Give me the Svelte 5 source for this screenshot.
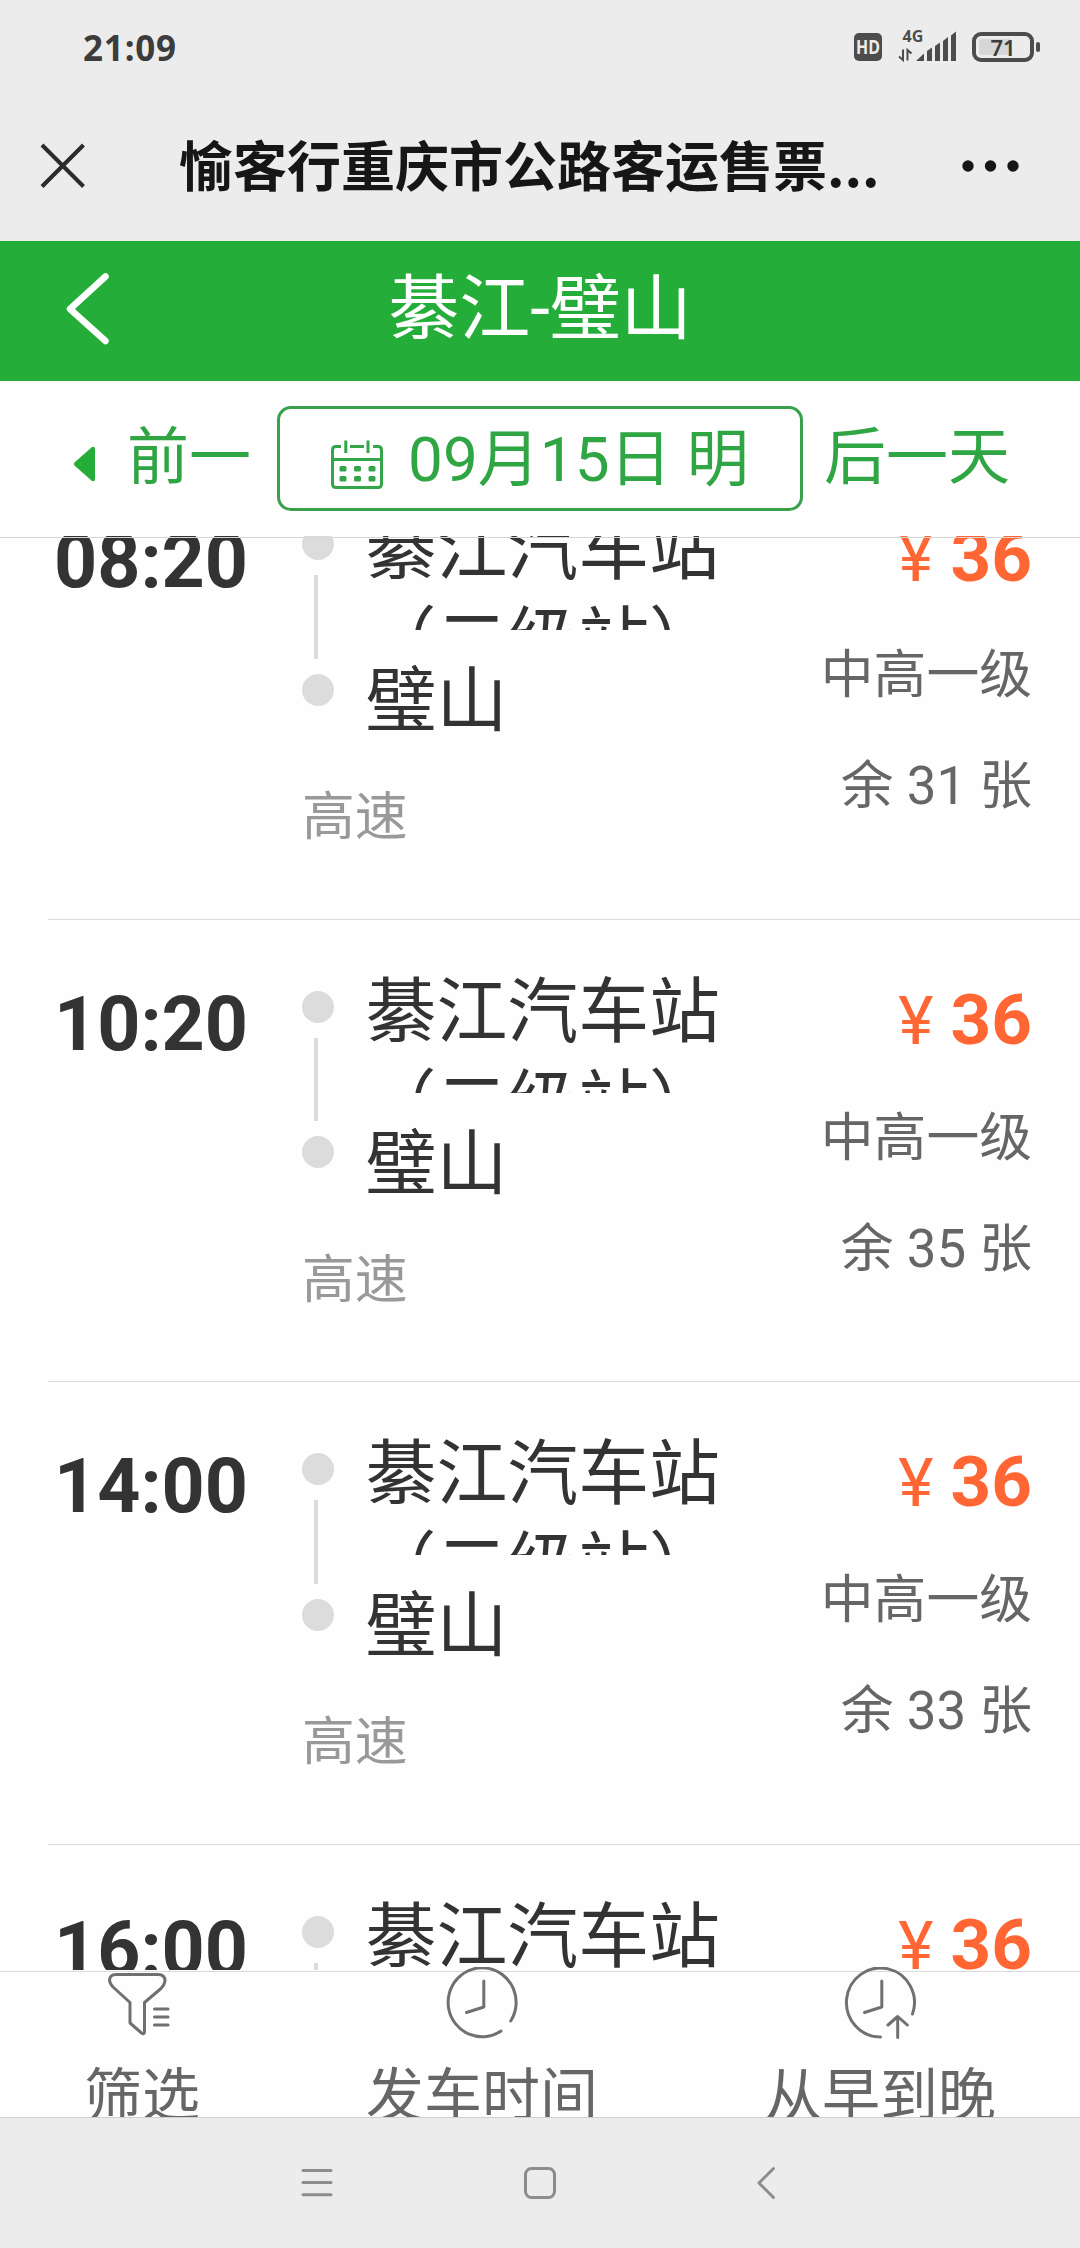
<script lang="ts">
  type Trip = {
    time: string;
    from: string;
    to: string;
    road: string;
    price: number;
    level: string;
    left: number;
  };

  const base = { from: '綦江汽车站（二级站）', to: '璧山', road: '高速', price: 36, level: '中高一级' };

  const trips: Trip[] = [
    { ...base, time: '08:20', left: 31 },
    { ...base, time: '10:20', left: 35 },
    { ...base, time: '14:00', left: 33 },
    { ...base, time: '16:00', left: 33 },
  ];

  let title = $state('愉客行重庆市公路客运售票...');
  let date = $state('09月15日 明');
</script>

<div class="screen">
  <div class="status">
    <span class="clock">21:09</span>
    <svg class="status-icons" viewBox="0 0 190 40" width="190" height="40">
      <rect x="0" y="5" width="28" height="28" rx="5" fill="#4c4c4c" />
      <text x="14" y="26" class="hd" text-anchor="middle" textLength="24" lengthAdjust="spacingAndGlyphs">HD</text>
      <text x="48.5" y="14" class="net">4G</text>
      <g fill="#4c4c4c">
        <path d="M62 33L70 25.5V33z" />
        <path d="M73 23l5-3.5V33h-5z" />
        <path d="M81 18l5-3.5V33h-5z" />
        <path d="M89 13l5-4V33h-5z" />
        <path d="M97 7.500l5-4V33h-5z" />
      </g>
      <path d="M45 28.500L49 32V21.500M57.500 25.500L53.500 22V32.500" fill="none" stroke="#4c4c4c" stroke-width="2" />
      <rect x="120" y="6" width="58" height="26" rx="7" fill="none" stroke="#4c4c4c" stroke-width="4" />
      <rect x="125" y="11" width="32" height="16" rx="2" fill="#d6d6d6" />
      <rect x="182" y="14" width="4" height="10" rx="2" fill="#4c4c4c" />
      <text x="149" y="28" class="pct" text-anchor="middle">71</text>
    </svg>
  </div>

  <div class="titlebar">
    <svg class="close" viewBox="0 0 46 46" width="46" height="46">
      <path d="M2 2L43.500 43.500M43.500 2L2 43.500" fill="none" stroke="#2b2b2b" stroke-width="4" />
    </svg>
    <h1>{title}</h1>
    <svg class="more" viewBox="0 0 60 12" width="60" height="12">
      <circle cx="6" cy="6" r="5.700" />
      <circle cx="28.500" cy="6" r="5.700" />
      <circle cx="51" cy="6" r="5.700" />
    </svg>
  </div>

  <header>
    <svg class="back" viewBox="0 0 44 74" width="44" height="74">
      <path d="M39.500 4.500L4 37L39.500 69" fill="none" stroke="#fff" stroke-width="6.500" stroke-linecap="round" stroke-linejoin="round" />
    </svg>
    <h2>綦江-璧山</h2>
  </header>

  <div class="days">
    <div class="prev">
      <svg viewBox="0 0 22 36" width="22" height="36">
        <path d="M1.500 16.500L19 1Q22 0 22 3V33Q22 36 19 35L1.500 19.500Q0 18 1.500 16.500z" fill="#24ad38" />
      </svg>
      <span>前一</span>
    </div>
    <div class="date">
      <svg viewBox="0 0 52 50" width="52" height="50" fill="none" stroke="#34a548" stroke-width="3">
        <path d="M10 6.500H5Q1.500 6.500 1.500 10V44Q1.500 47.500 5 47.500H47Q50.500 47.500 50.500 44V10Q50.500 6.500 47 6.500H42M19 6.500H33M1.500 19.500H50.500M14.800 .5V13M37 .5V13" />
        <g fill="#34a548" stroke="none">
          {#each [26, 36] as y}
            {#each [8.5, 23, 37.5] as x}
              <rect {x} {y} width="7" height="5.500" rx="1.500" />
            {/each}
          {/each}
        </g>
      </svg>
      <span>{date}</span>
    </div>
    <div class="next">后一天</div>
  </div>

  <main>
    <ul>
      {#each trips as trip (trip.time)}
        <li>
          <div class="time">{trip.time}</div>
          <div class="track">
            <i class="dot"></i>
            <i class="line"></i>
            <i class="dot"></i>
          </div>
          <div class="stations">
            <div class="from">{trip.from}</div>
            <div class="to">{trip.to}</div>
          </div>
          <div class="info">
            <div class="price"><span>¥</span>{trip.price}</div>
            <div class="level">{trip.level}</div>
            <div class="left">余 {trip.left} 张</div>
          </div>
          <div class="road">{trip.road}</div>
        </li>
      {/each}
    </ul>
  </main>

  <footer>
    <div class="tab">
      <svg class="funnel" viewBox="0 0 74 74" width="74" height="74">
        <path d="M18 7.500H60Q67 7.500 67 14Q66.500 18 63 21.500L46.500 35.500V65Q46 68 43.500 66L32 56V35.500L15 20Q11.500 16 11.500 13Q12 7.500 18 7.500zM56.500 42H70M56.500 50H70M56.500 58H70" />
      </svg>
      <span>筛选</span>
    </div>
    <div class="tab">
      <svg viewBox="0 0 74 74" width="74" height="74">
        <path d="M65.700 54A34 34.500 0 1 0 56 64M38.800 14V40L21.500 45.500" />
      </svg>
      <span>发车时间</span>
    </div>
    <div class="tab">
      <svg viewBox="0 0 74 74" width="74" height="74">
        <path d="M69.500 47A34 34.500 0 1 0 37.500 70M38.800 14V40L21.500 45.500M54.700 70.500V49.500M45 58L54.700 49.500L64.300 58" />
      </svg>
      <span>从早到晚</span>
    </div>
  </footer>

  <nav>
    <svg viewBox="0 0 34 34" width="34" height="34">
      <path d="M3 4.500H31M3 16.500H31M3 28.700H31" />
    </svg>
    <svg viewBox="0 0 34 34" width="34" height="34">
      <rect x="2.500" y="2.500" width="29" height="29" rx="6" />
    </svg>
    <svg viewBox="0 0 34 34" width="34" height="34">
      <path d="M27.500 2.500L13 17L27.500 31.500" />
    </svg>
  </nav>
</div>

<style>
  :global(body) {
    margin: 0;
    background: #fff;
  }
  .screen {
    width: 1080px;
    height: 2248px;
    display: flex;
    flex-direction: column;
    overflow: hidden;
    background: #fefefe;
    color: #333;
    font-family: Roboto, "Noto Sans CJK SC", sans-serif;
  }
  h1, h2, ul {
    margin: 0;
    padding: 0;
    font-weight: normal;
  }
  svg {
    flex: none;
    display: block;
  }

  .status {
    height: 96px;
    flex: none;
    box-sizing: border-box;
    padding: 28px 36px 0 83px;
    display: flex;
    justify-content: space-between;
    align-items: flex-start;
    background: #ececec;
  }
  .clock {
    font: 700 35px/40px "Noto Sans", sans-serif;
    letter-spacing: 0.8px;
    color: #3c3c3c;
  }
  .hd {
    font: 700 19px "Open Sans", sans-serif;
    fill: #ececec;
  }
  .net {
    font: 700 16px "Noto Sans", sans-serif;
    fill: #4c4c4c;
  }
  .pct {
    font: 600 22px "Noto Sans", sans-serif;
    fill: #3c3c3c;
  }

  .titlebar {
    height: 145px;
    flex: none;
    display: flex;
    align-items: center;
    box-sizing: border-box;
    padding: 0 58px 6px 40px;
    background: #ececec;
  }
  h1 {
    margin: -3px 0 0 93px;
    flex: 1;
    font: 700 54px/80px "Noto Sans CJK SC", sans-serif;
    color: #161616;
    white-space: nowrap;
  }
  .more {
    fill: #161616;
  }

  header {
    height: 140px;
    flex: none;
    display: grid;
    grid-template-columns: 110px 1fr 110px;
    align-items: center;
    box-sizing: border-box;
    padding-bottom: 4px;
    background: #24ad38;
  }
  .back {
    justify-self: end;
  }
  h2 {
    font-size: 71px;
    line-height: 100px;
    text-align: center;
    color: #fff;
  }

  .days {
    height: 155px;
    flex: none;
    display: grid;
    grid-template-columns: 277px 526px 1fr;
    box-sizing: border-box;
    padding: 25px 0;
    color: #2fa544;
    font-size: 62px;
    line-height: 105px;
    white-space: nowrap;
  }
  .prev {
    display: flex;
    padding-left: 73px;
    gap: 32px;
  }
  .prev svg {
    margin-top: 40px;
  }
  .prev span, .next {
    margin-top: -1px;
  }
  .date {
    display: flex;
    justify-content: center;
    gap: 25px;
    border: 3px solid #3ba04c;
    border-radius: 14px;
    line-height: 101px;
    box-sizing: border-box;
    height: 105px;
  }
  .date svg {
    margin-top: 31px;
  }
  .next {
    padding-left: 21px;
  }

  main {
    position: relative;
    height: 1434px;
    flex: none;
    overflow: hidden;
  }
  /* hairline under the day switcher, drawn over the scrolled list */
  main::after {
    content: '';
    position: absolute;
    top: 1px;
    left: 0;
    right: 0;
    height: 1px;
    background: #d6d6d6;
  }
  ul {
    margin-top: -79px;
    list-style: none;
  }
  li {
    height: 462.5px;
    box-sizing: border-box;
    margin-left: 48px;
    padding-right: 48px;
    border-bottom: 1px solid #dadada;
    display: grid;
    grid-template-columns: 254px 63.500px 1fr 230px;
    grid-template-rows: 306px 1fr;
  }
  .time {
    padding: 60px 0 0 6px;
    font-size: 75.300px;
    font-weight: 700;
    line-height: 89px;
  }
  .track {
    width: 32px;
    padding-top: 71px;
    display: flex;
    flex-direction: column;
    gap: 15px;
  }
  .dot {
    width: 32px;
    height: 32px;
    border-radius: 50%;
    background: #dcdcdc;
  }
  .line {
    width: 4px;
    height: 83.500px;
    margin-left: 12px;
    background: #dcdcdc;
  }
  .stations {
    width: 370px;
    padding-top: 46px;
    font-size: 70.900px;
    line-height: 92px;
  }
  .from {
    height: 127px;
    overflow: hidden;
  }
  .to {
    margin-top: 25px;
  }
  .info {
    grid-row: 1 / 3;
    grid-column: 4;
    padding-top: 55px;
    text-align: right;
    color: #666;
    font-size: 52.800px;
    white-space: nowrap;
  }
  .price {
    font-size: 71px;
    font-weight: 700;
    line-height: 90px;
    color: #ff6633;
  }
  .price span {
    margin-right: 17px;
    font-size: 67px;
    font-weight: 400;
  }
  .level {
    margin-top: 27px;
    line-height: 90px;
  }
  .left {
    margin-top: 21px;
    line-height: 90px;
  }
  .road {
    grid-column: 2 / 4;
    grid-row: 2;
    font-size: 52.800px;
    line-height: 108px;
    color: #999;
  }

  footer {
    position: relative;
    height: 148px;
    flex: none;
    box-sizing: border-box;
    display: grid;
    grid-template-columns: 284px 396px 1fr;
    border-bottom: 1px solid #d0d0d0;
  }
  footer::before {
    content: '';
    position: absolute;
    top: 1px;
    left: 0;
    right: 0;
    height: 1px;
    background: #dadada;
  }
  .tab {
    position: relative;
    height: 151px;
    margin-top: -4px;
    display: flex;
    flex-direction: column;
    align-items: center;
    overflow: hidden;
    font-size: 58px;
    line-height: 80px;
    color: #666;
  }
  .tab svg {
    margin-top: 1px;
    fill: none;
    stroke: #707070;
    stroke-width: 3;
    stroke-linecap: round;
    stroke-linejoin: round;
  }
  .tab .funnel {
    margin-right: 14px;
  }
  .tab span {
    margin-top: 15px;
  }

  nav {
    flex: 1;
    display: flex;
    align-items: center;
    justify-content: center;
    gap: 189px;
    background: #ececec;
  }
  nav svg {
    fill: none;
    stroke: #8c8c8c;
    stroke-width: 3;
    stroke-linecap: round;
    stroke-linejoin: round;
  }
</style>
